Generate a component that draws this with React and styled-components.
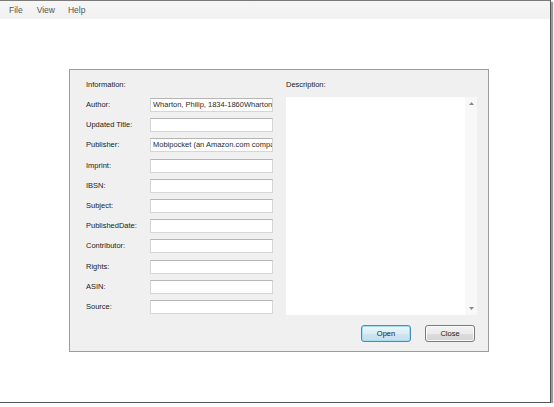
import React from 'react'
import styled, { createGlobalStyle } from 'styled-components'

const GlobalStyle = createGlobalStyle`
  html, body {
    margin: 0;
    padding: 0;
    background: #ffffff;
  }
  body {
    font-family: "Liberation Sans", Arial, sans-serif;
  }
`

const Screen = styled.div`
  width: 550px;
  height: 401px;
  background: #ffffff;
  border-top: 1px solid #7a7a7a;
  border-right: 1px solid #555555;
  border-bottom: 1px solid #555555;
  box-shadow: 2px 2px 1px #9a9a9a;
  display: flex;
  flex-direction: column;
`

const MenuBar = styled.div`
  height: 17px;
  display: flex;
  align-items: center;
  padding-left: 9px;
  background: linear-gradient(#f6f6f6, #f1f1f1);
  border-bottom: 1px solid #f3f3f3;
`

const MenuItem = styled.span`
  font-size: 8.5px;
  color: #555555;
  margin-right: ${p => p.gap}px;
`

const Dialog = styled.div`
  box-sizing: border-box;
  margin: 50px 0 0 69px;
  width: 420px;
  height: 283px;
  border: 1px solid #9c9c9c;
  background: #f0f0f0;
  display: grid;
  grid-template-columns: 187px 191px;
  column-gap: 13px;
  padding: 8px 0 0 16px;
`

const Column = styled.div`
  display: flex;
  flex-direction: column;
`

const Heading = styled.div`
  font-size: 7.5px;
  color: #222222;
  height: 14px;
  line-height: 14px;
  margin-bottom: ${p => p.space}px;
`

const Fields = styled.div`
  display: grid;
  grid-template-columns: 64px 123px;
  row-gap: 6.2px;
  align-items: center;
`

const Label = styled.div`
  font-size: 7.5px;
  color: #222222;
  line-height: 14px;
`

const Input = styled.div`
  height: 12px;
  background: #ffffff;
  border: 1px solid #d5d5d5;
  border-top-color: #b5b5b5;
  font-size: 7.5px;
  line-height: 12px;
  color: #2a2a2a;
  padding-left: 2px;
  white-space: nowrap;
  overflow: hidden;
`

const TextArea = styled.div`
  height: 218px;
  display: flex;
  background: #ffffff;
`

const TextBody = styled.div`
  flex: 1;
`

const ScrollBar = styled.div`
  width: 12px;
  background: #f8f8f8;
  display: flex;
  flex-direction: column;
  justify-content: space-between;
  align-items: center;
  padding: 5px 0;
`

const Buttons = styled.div`
  display: flex;
  justify-content: flex-end;
  gap: 14px;
  padding-right: 2px;
  margin-top: 10px;
`

const Button = styled.div`
  width: 48px;
  height: 15px;
  border-radius: 3px;
  border: 1px solid ${p => (p.primary ? '#3c8fc0' : '#7a7a7a')};
  background: ${p =>
    p.primary
      ? 'linear-gradient(#eaf6fb, #dcecf5 50%, #cfe4ef 51%, #c6dfec)'
      : 'linear-gradient(#f3f3f3, #ebebeb 50%, #dddddd 51%, #d3d3d3)'};
  box-shadow: inset 0 0 0 1px ${p => (p.primary ? '#a8dcf0' : '#fbfbfb')};
  font-size: 7.5px;
  color: #1a1a1a;
  display: flex;
  align-items: center;
  justify-content: center;
`

const fields = [
  ['Author:', 'Wharton, Philip, 1834-1860Wharton,'],
  ['Updated Title:', ''],
  ['Publisher:', 'Mobipocket (an Amazon.com compa'],
  ['Imprint:', ''],
  ['IBSN:', ''],
  ['Subject:', ''],
  ['PublishedDate:', ''],
  ['Contributor:', ''],
  ['Rights:', ''],
  ['ASIN:', ''],
  ['Source:', ''],
]

const Arrow = ({ down }) => (
  <svg width="5" height="3" viewBox="0 0 5 3">
    <path d={down ? 'M0 0 L5 0 L2.5 3 Z' : 'M0 3 L5 3 L2.5 0 Z'} fill="#8a8a8a" />
  </svg>
)

const App = () => (
  <>
    <GlobalStyle />
    <Screen>
      <MenuBar>
        <MenuItem gap={14}>File</MenuItem>
        <MenuItem gap={13}>View</MenuItem>
        <MenuItem gap={0}>Help</MenuItem>
      </MenuBar>
      <Dialog>
        <Column>
          <Heading space={6}>Information:</Heading>
          <Fields>
            {fields.map(([label, value]) => (
              <React.Fragment key={label}>
                <Label>{label}</Label>
                <Input>{value}</Input>
              </React.Fragment>
            ))}
          </Fields>
        </Column>
        <Column>
          <Heading space={5}>Description:</Heading>
          <TextArea>
            <TextBody />
            <ScrollBar>
              <Arrow />
              <Arrow down />
            </ScrollBar>
          </TextArea>
          <Buttons>
            <Button primary>Open</Button>
            <Button>Close</Button>
          </Buttons>
        </Column>
      </Dialog>
    </Screen>
  </>
)

export default App
